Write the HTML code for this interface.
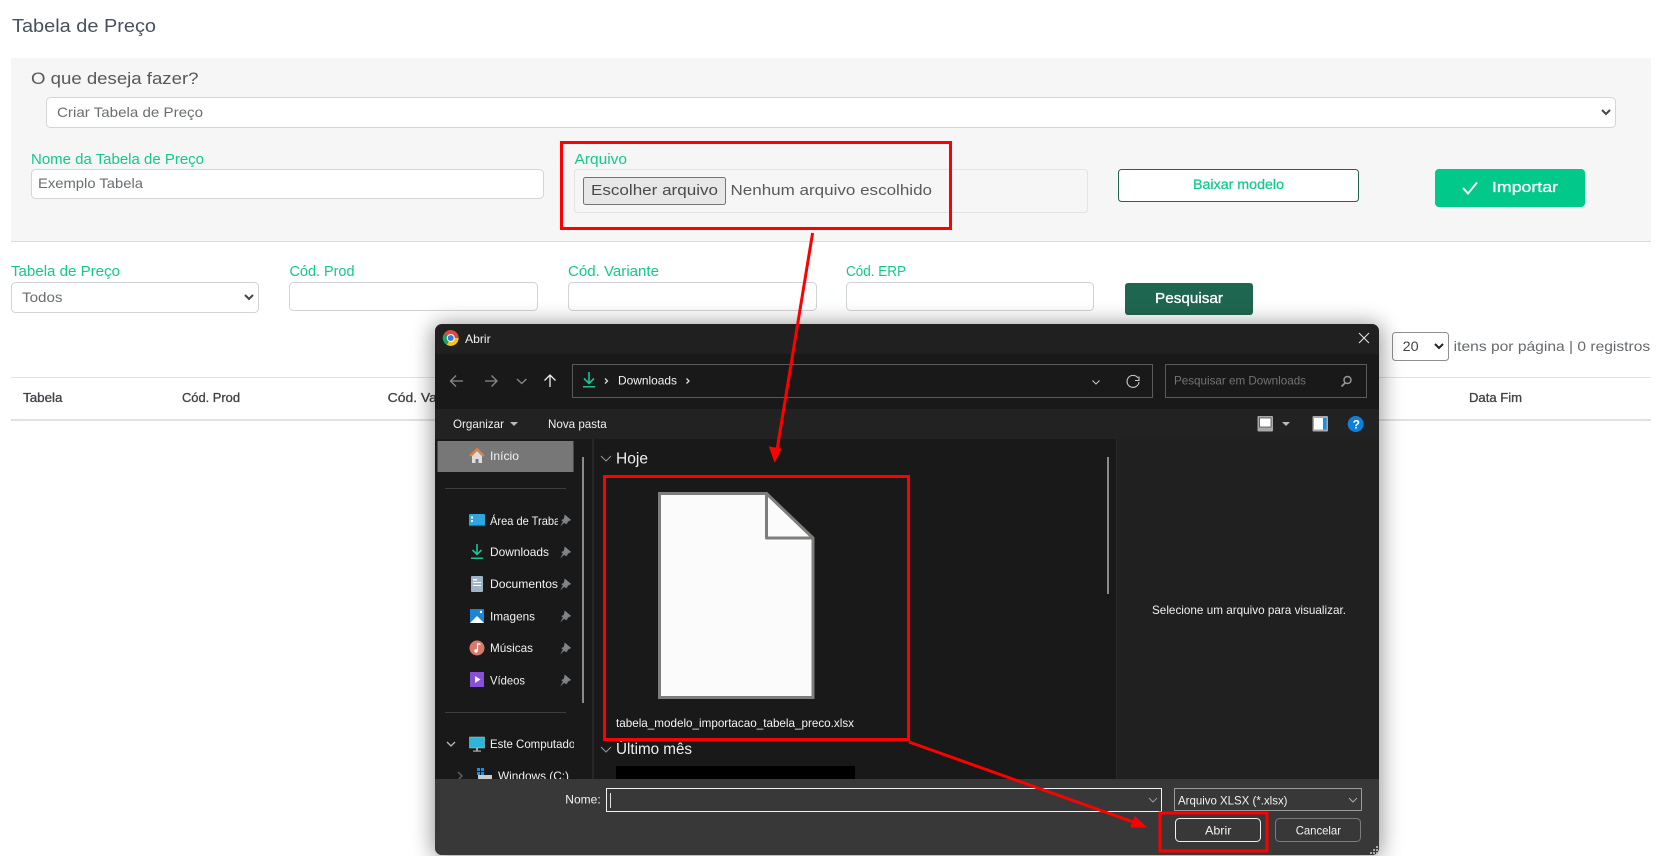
<!DOCTYPE html>
<html lang="pt-BR"><head><meta charset="utf-8"><title>Tabela de Preço</title>
<style>
html,body{margin:0;padding:0;background:#fff;width:1660px;height:856px;overflow:hidden}
svg{display:block}
text{font-family:"Liberation Sans",sans-serif;white-space:pre}
.g{fill:#12c98c;font-size:14.5px}
.d{fill:#6a6e72;font-size:14px}
.th{fill:#3f4347;font-size:12.5px;stroke:#3f4347;stroke-width:.3px}
.w{fill:#f2f2f2;font-size:12px}
</style></head><body>
<svg width="1660" height="856" viewBox="0 0 1660 856" xmlns="http://www.w3.org/2000/svg">
<defs>
<filter id="blur" x="-20%" y="-20%" width="140%" height="140%"><feGaussianBlur stdDeviation="11"/></filter>
<clipPath id="c1"><rect x="488" y="505" width="70" height="30"/></clipPath>
<clipPath id="c2"><rect x="488" y="733" width="86" height="30"/></clipPath>
<g id="pin"><path d="M-1 -5.5 L5.5 0 L2.5 1.5 L0.5 4.5 L-1.5 2.8 L-5.5 6.5 L-2.8 1.5 L-4.5 0 L-2 -1 Z" fill="#7f8388"/></g>
</defs>
<rect width="1660" height="856" fill="#fff"/>

<!-- page -->
<text x="12" y="32" fill="#46505f" font-size="18" textLength="144" lengthAdjust="spacingAndGlyphs">Tabela de Preço</text>
<rect x="11" y="58" width="1640" height="183" fill="#f6f6f6"/>
<rect x="11" y="241" width="1640" height="1" fill="#d9dcdf"/>
<text x="31" y="84" fill="#55595d" font-size="16.5" textLength="167.5" lengthAdjust="spacingAndGlyphs">O que deseja fazer?</text>
<rect x="46.5" y="97.5" width="1569" height="30" rx="4" fill="#fff" stroke="#d3d6d9"/>
<text x="57" y="117" class="d" textLength="146" lengthAdjust="spacingAndGlyphs">Criar Tabela de Preço</text>
<path d="M1602 110l4 4 4-4" fill="none" stroke="#444" stroke-width="2"/>

<text x="31" y="164" class="g" textLength="173" lengthAdjust="spacingAndGlyphs">Nome da Tabela de Preço</text>
<rect x="31.5" y="169.5" width="512" height="29" rx="4" fill="#fff" stroke="#d3d6d9"/>
<text x="38" y="188" class="d" textLength="105" lengthAdjust="spacingAndGlyphs">Exemplo Tabela</text>

<text x="574.5" y="164" class="g" textLength="52.5" lengthAdjust="spacingAndGlyphs">Arquivo</text>
<rect x="574.5" y="169.5" width="513" height="43" rx="3" fill="#f6f6f6" stroke="#e3e3e3"/>
<rect x="583.5" y="177.5" width="142" height="27" rx="2" fill="#e7e7e7" stroke="#747474"/>
<text x="591" y="195" fill="#4a4a4a" font-size="15" textLength="127" lengthAdjust="spacingAndGlyphs">Escolher arquivo</text>
<text x="730.5" y="195" fill="#5a5a5a" font-size="15" textLength="201.5" lengthAdjust="spacingAndGlyphs">Nenhum arquivo escolhido</text>

<rect x="1118.5" y="169.5" width="240" height="32" rx="3" fill="#fff" stroke="#1f6650"/>
<text x="1193" y="189" fill="#12c98c" font-size="13.5" stroke="#12c98c" stroke-width=".25" textLength="91" lengthAdjust="spacingAndGlyphs">Baixar modelo</text>
<rect x="1435" y="169" width="150" height="38" rx="4" fill="#00c98a"/>
<path d="M1463 188l5 5.5 9-11" fill="none" stroke="#fff" stroke-width="2"/>
<text x="1492" y="192" fill="#fff" font-size="15" stroke="#fff" stroke-width=".3" textLength="66" lengthAdjust="spacingAndGlyphs">Importar</text>

<text x="11" y="276" class="g" textLength="109" lengthAdjust="spacingAndGlyphs">Tabela de Preço</text>
<rect x="11.5" y="282.5" width="247" height="30" rx="4" fill="#fff" stroke="#d0d3d7"/>
<text x="22" y="302" class="d" textLength="40.5" lengthAdjust="spacingAndGlyphs">Todos</text>
<path d="M245 295l4 4 4-4" fill="none" stroke="#444" stroke-width="2"/>
<text x="289.5" y="276" class="g" textLength="65" lengthAdjust="spacingAndGlyphs">Cód. Prod</text>
<rect x="289.5" y="282.5" width="248" height="28" rx="4" fill="#fff" stroke="#d0d3d7"/>
<text x="568" y="276" class="g" textLength="91" lengthAdjust="spacingAndGlyphs">Cód. Variante</text>
<rect x="568.5" y="282.5" width="248" height="28" rx="4" fill="#fff" stroke="#d0d3d7"/>
<text x="846" y="276" class="g" textLength="60" lengthAdjust="spacingAndGlyphs">Cód. ERP</text>
<rect x="846.5" y="282.5" width="247" height="28" rx="4" fill="#fff" stroke="#d0d3d7"/>
<rect x="1125" y="283" width="128" height="32" rx="3" fill="#1f6650"/>
<text x="1155" y="303" fill="#fff" font-size="14.5" stroke="#fff" stroke-width=".3" textLength="68" lengthAdjust="spacingAndGlyphs">Pesquisar</text>

<rect x="1392.5" y="332.5" width="56" height="28" rx="3" fill="#fff" stroke="#8f8f8f"/>
<text x="1402.7" y="351" fill="#444" font-size="14" textLength="16" lengthAdjust="spacingAndGlyphs">20</text>
<path d="M1435 344l4 4 4-4" fill="none" stroke="#222" stroke-width="2"/>
<text x="1453.7" y="351" fill="#666a6e" font-size="14" textLength="196.5" lengthAdjust="spacingAndGlyphs">itens por página | 0 registros</text>

<rect x="11" y="377" width="1640" height="1" fill="#dee2e6"/>
<rect x="11" y="419" width="1640" height="2" fill="#dee2e6"/>
<text x="23" y="402" class="th" textLength="39.5" lengthAdjust="spacingAndGlyphs">Tabela</text>
<text x="182" y="402" class="th" textLength="58" lengthAdjust="spacingAndGlyphs">Cód. Prod</text>
<text x="387.7" y="402" class="th" textLength="84" lengthAdjust="spacingAndGlyphs">Cód. Variante</text>
<text x="1469" y="402" class="th" textLength="53" lengthAdjust="spacingAndGlyphs">Data Fim</text>

<!-- dialog shadow -->
<rect x="433" y="324" width="948" height="534" rx="8" fill="#000" opacity=".42" filter="url(#blur)"/>

<!-- dialog -->
<rect x="435" y="324" width="944" height="531" rx="7" fill="#202020"/>
<rect x="435" y="354" width="944" height="55" fill="#191919"/>
<rect x="435" y="409" width="944" height="30" fill="#222"/>
<rect x="435" y="439" width="682" height="340" fill="#191919"/>
<rect x="1117" y="439" width="262" height="340" fill="#202020"/>
<rect x="1116" y="439" width="1" height="340" fill="#2a2a2a"/>
<path d="M435 779H1379V848a7 7 0 0 1-7 7H442a7 7 0 0 1-7-7Z" fill="#383838"/>

<!-- chrome icon -->
<path d="M450.7 338L443.8 334A8 8 0 0 1 458.7 338Z" fill="#dd4b3e"/>
<path d="M450.7 338L446.7 344.9A8 8 0 0 1 443.8 334Z" fill="#1ea362"/>
<path d="M450.7 338L458.7 338A8 8 0 0 1 446.7 344.9Z" fill="#f5c518"/>
<circle cx="450.7" cy="338" r="4" fill="#fff"/><circle cx="450.7" cy="338" r="3" fill="#3b78e7"/>
<text x="465" y="343" class="w" textLength="25.7" lengthAdjust="spacingAndGlyphs">Abrir</text>
<path d="M1359 333l10 10M1369 333l-10 10" stroke="#e8e8e8" stroke-width="1"/>

<!-- nav -->
<path d="M463 381h-12M456 375.5l-5.5 5.5 5.5 5.5" fill="none" stroke="#8a8a8a" stroke-width="1.3"/>
<path d="M485 381h12M491.5 375.5l5.5 5.5-5.5 5.5" fill="none" stroke="#8a8a8a" stroke-width="1.3"/>
<path d="M517 379l4.7 4.5 4.7-4.5" fill="none" stroke="#8a8a8a" stroke-width="1.3"/>
<path d="M550 387v-12M544.5 380.5l5.5-5.5 5.5 5.5" fill="none" stroke="#eee" stroke-width="1.3"/>
<rect x="572.5" y="364.5" width="580" height="33" fill="#191919" stroke="#5a5a5a"/>
<path d="M589 372v11M584 378.5l5 5 5-5" fill="none" stroke="#1fc193" stroke-width="1.6"/><rect x="583" y="386" width="12" height="1.5" fill="#1fc193"/>
<path d="M605 378.5l2.5 2.5-2.5 2.5" fill="none" stroke="#ddd" stroke-width="1.3"/>
<text x="618" y="384.7" class="w" textLength="59" lengthAdjust="spacingAndGlyphs">Downloads</text>
<path d="M686.5 378.5l2.5 2.5-2.5 2.5" fill="none" stroke="#ddd" stroke-width="1.3"/>
<path d="M1092.5 380.5l3.5 3.5 3.5-3.5" fill="none" stroke="#ccc"/>
<path d="M1138 378a6 6 0 1 0 1 4M1139 376.5v4h-4" fill="none" stroke="#ccc" stroke-width="1.1"/>
<rect x="1165.5" y="364.5" width="201" height="33" fill="#191919" stroke="#5a5a5a"/>
<text x="1174" y="384.7" fill="#737373" font-size="12" textLength="132" lengthAdjust="spacingAndGlyphs">Pesquisar em Downloads</text>
<circle cx="1347.5" cy="380" r="3.5" fill="none" stroke="#999" stroke-width="1.4"/><path d="M1345 383l-3.5 3.5" stroke="#999" stroke-width="1.6"/>

<!-- command bar -->
<text x="453" y="428" class="w" textLength="51" lengthAdjust="spacingAndGlyphs">Organizar</text>
<path d="M510 422h8l-4 4z" fill="#bbb"/>
<text x="548" y="428" class="w" textLength="58.7" lengthAdjust="spacingAndGlyphs">Nova pasta</text>
<rect x="1257.5" y="416" width="15.5" height="15.5" rx="1" fill="#a8a8a8"/><rect x="1259.5" y="418" width="11.5" height="9" fill="#fff" stroke="#222" stroke-width=".6"/>
<path d="M1282 422h8l-4 4z" fill="#bbb"/>
<rect x="1312.5" y="416" width="15.5" height="15.5" rx="1" fill="#a8a8a8"/><rect x="1314" y="418" width="9" height="11.5" fill="#fff"/><rect x="1323" y="418" width="3.5" height="11.5" fill="#1a8fe0"/>
<circle cx="1355.7" cy="424" r="8" fill="#0f80d8"/>
<text x="1352.6" y="428.5" fill="#fff" font-size="12" font-weight="bold">?</text>

<!-- sidebar -->
<rect x="437.5" y="441" width="136" height="31" fill="#777"/>
<path d="M470 456l7-7 7 7" fill="none" stroke="#e8833a" stroke-width="2"/><path d="M472 456l5-5 5 5v7h-3.5v-4h-3v4H472z" fill="#ddd"/>
<text x="490" y="460" class="w" textLength="29" lengthAdjust="spacingAndGlyphs">Início</text>
<rect x="445" y="488" width="121" height="1" fill="#3e3e3e"/>
<rect x="582" y="457" width="2" height="246" fill="#8a8a8a"/>
<rect x="592" y="439" width="2" height="340" fill="#262626"/>

<rect x="469" y="514" width="16" height="11.5" rx="1" fill="#2fa4e0"/><rect x="471" y="516.5" width="2" height="2" fill="#fff"/><rect x="471" y="520" width="2" height="2" fill="#fff"/><rect x="469" y="525" width="16" height="1.2" fill="#1a6ea8"/>
<text x="490" y="525" class="w" textLength="85" lengthAdjust="spacingAndGlyphs" clip-path="url(#c1)">Área de Trabalho</text>
<use href="#pin" x="565.7" y="520"/>

<path d="M477 544v10.5M472.5 550l4.5 4.5 4.5-4.5" fill="none" stroke="#1fc193" stroke-width="1.6"/><rect x="471" y="557.5" width="12" height="1.5" fill="#1fc193"/>
<text x="490" y="556" class="w" textLength="59" lengthAdjust="spacingAndGlyphs">Downloads</text>
<use href="#pin" x="565.7" y="552"/>

<rect x="471" y="576" width="12" height="16" rx="1" fill="#9fb3c9"/><rect x="473" y="582" width="8" height="1" fill="#fff"/><rect x="473" y="585" width="8" height="1" fill="#fff"/><rect x="473" y="579" width="4" height="1.5" fill="#fff"/>
<text x="490" y="588" class="w" textLength="68" lengthAdjust="spacingAndGlyphs">Documentos</text>
<use href="#pin" x="565.7" y="584"/>

<rect x="470" y="609" width="14" height="14" fill="#1b84d6"/><path d="M470 623l7-7 7 7z" fill="#fff"/><circle cx="481" cy="612" r="1.2" fill="#fff"/>
<text x="490" y="620.5" class="w" textLength="45" lengthAdjust="spacingAndGlyphs">Imagens</text>
<use href="#pin" x="565.7" y="616"/>

<circle cx="477" cy="648" r="7.5" fill="#d9796c"/><path d="M477.5 643.5v7M477.5 643.5l3 1" fill="none" stroke="#fff" stroke-width="1.2"/><circle cx="476" cy="651" r="1.7" fill="#fff"/>
<text x="490" y="652" class="w" textLength="43" lengthAdjust="spacingAndGlyphs">Músicas</text>
<use href="#pin" x="565.7" y="648"/>

<rect x="470" y="672" width="14" height="15" fill="#8a4fd8"/><path d="M475 676v7l5.5-3.5z" fill="#fff"/>
<text x="490" y="684.5" class="w" textLength="35" lengthAdjust="spacingAndGlyphs">Vídeos</text>
<use href="#pin" x="565.7" y="680"/>

<rect x="445" y="712" width="121" height="1" fill="#3e3e3e"/>
<path d="M447 742l4 4 4-4" fill="none" stroke="#bbb" stroke-width="1.3"/>
<rect x="469.5" y="737" width="15" height="11" fill="#2bb5d8" stroke="#9fd8e8" stroke-width=".5"/><rect x="476" y="748" width="2" height="2.5" fill="#aaa"/><rect x="473" y="750.5" width="8" height="1.2" fill="#aaa"/>
<text x="490" y="748" class="w" textLength="89" lengthAdjust="spacingAndGlyphs" clip-path="url(#c2)">Este Computador</text>
<path d="M458 772l4 4-4 4" fill="none" stroke="#666" stroke-width="1.3"/>
<rect x="477" y="768" width="3" height="3" fill="#1a8fe0"/><rect x="481" y="768" width="3" height="3" fill="#1a8fe0"/><rect x="477" y="772" width="3" height="3" fill="#1a8fe0"/><rect x="481" y="772" width="3" height="3" fill="#1a8fe0"/>
<rect x="478" y="775" width="14" height="5" fill="#ccc"/>
<text x="498" y="780" class="w" textLength="71" lengthAdjust="spacingAndGlyphs">Windows (C:)</text>

<!-- file list -->
<path d="M601 456l5 5 5-5" fill="none" stroke="#999" stroke-width="1"/>
<text x="616" y="463.5" fill="#efefef" font-size="15.5" textLength="32" lengthAdjust="spacingAndGlyphs">Hoje</text>
<path d="M659.5 493.5H766.5L813 539V697.5H659.5Z" fill="#fbfbfb" stroke="#7d7d7b" stroke-width="3"/>
<path d="M766.5 493.5V538H813Z" fill="#fbfbfb" stroke="#7d7d7b" stroke-width="3" stroke-linejoin="round"/>
<text x="616" y="727" fill="#f5f5f5" font-size="12" textLength="238" lengthAdjust="spacingAndGlyphs">tabela_modelo_importacao_tabela_preco.xlsx</text>
<path d="M601 747l5 5 5-5" fill="none" stroke="#999" stroke-width="1"/>
<text x="616" y="754" fill="#efefef" font-size="15.5" textLength="76" lengthAdjust="spacingAndGlyphs">Último mês</text>
<rect x="616" y="766" width="239" height="13" fill="#000"/>
<rect x="1107" y="457" width="2" height="137" fill="#8a8a8a"/>
<text x="1152" y="614" fill="#f0f0f0" font-size="12" textLength="194" lengthAdjust="spacingAndGlyphs">Selecione um arquivo para visualizar.</text>

<!-- footer redraw to clip sidebar -->
<rect x="435" y="779" width="944" height="10" fill="#383838"/>
<text x="565.3" y="803.5" class="w" textLength="35.4" lengthAdjust="spacingAndGlyphs">Nome:</text>
<rect x="606.5" y="788.5" width="555" height="23" fill="#383838" stroke="#f2f2f2"/>
<rect x="610" y="793" width="1" height="15" fill="#ddd"/>
<path d="M1149 798l4 4 4-4" fill="none" stroke="#999"/>
<rect x="1174.5" y="788.5" width="187" height="22" fill="#383838" stroke="#9a9a9a"/>
<text x="1178" y="804.5" class="w" textLength="109.5" lengthAdjust="spacingAndGlyphs">Arquivo XLSX (*.xlsx)</text>
<path d="M1349 798l4 4 4-4" fill="none" stroke="#aaa"/>
<rect x="1175.5" y="818.5" width="85" height="23" rx="4" fill="#383838" stroke="#f0f0f0"/>
<text x="1205" y="834.5" class="w" textLength="26.4" lengthAdjust="spacingAndGlyphs">Abrir</text>
<rect x="1275.5" y="818.5" width="85" height="23" rx="4" fill="#383838" stroke="#7c7c7c"/>
<text x="1295.7" y="834.5" class="w" textLength="45.3" lengthAdjust="spacingAndGlyphs">Cancelar</text>
<g fill="#aaa"><rect x="1376" y="846" width="2" height="2"/><rect x="1373" y="849" width="2" height="2"/><rect x="1376" y="849" width="2" height="2"/><rect x="1370" y="852" width="2" height="2"/><rect x="1373" y="852" width="2" height="2"/><rect x="1376" y="852" width="2" height="2"/></g>

<!-- red annotations -->
<g fill="none" stroke="#f00" stroke-width="3">
<rect x="561.5" y="142.5" width="389" height="86"/>
<rect x="604.5" y="476.5" width="304" height="263"/>
<rect x="1160" y="813" width="107" height="38"/>
<path d="M812.6 233L777 450"/>
<path d="M909 742L1136 823"/>
</g>
<path d="M774.7 461.5L769.5 447L781 449Z" fill="#f00" stroke="#f00"/>
<path d="M1146 827L1131 827L1135 817Z" fill="#f00" stroke="#f00"/>
</svg>
</body></html>
